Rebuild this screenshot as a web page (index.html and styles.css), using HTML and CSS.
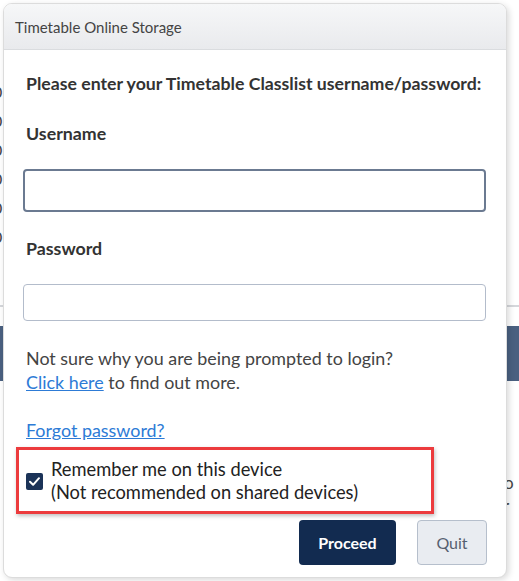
FILE: index.html
```html
<!DOCTYPE html>
<html lang="en">
<head>
    <meta charset="UTF-8">
    <meta name="viewport" content="width=device-width, initial-scale=1.0">
    <title>Timetable Online Storage</title>
    <link rel="stylesheet" href="styles.css">
</head>
<body>

    <div class="page">
        <div class="page-title">Timetable</div>
        <ul class="page-list">
            <li>0</li><li>0</li><li>0</li><li>0</li><li>0</li><li>0</li><li>,</li>
        </ul>
        <div class="page-rule"></div>
        <div class="page-band"></div>
        <p class="page-text">If you want to keep a copy of your timetable, you can also save the file to your computer and open it again later from the same screen.</p>
        <p class="page-text">Your timetable will be stored online.</p>
    </div>

    <div class="dialog">
        <div class="dialog-header">Timetable Online Storage</div>
        <div class="dialog-body">
            <p class="intro">Please enter your Timetable Classlist username/password:</p>

            <label class="field-label" for="username">Username</label>
            <input class="field username" id="username" type="text">

            <label class="field-label" for="password">Password</label>
            <input class="field password" id="password" type="password">

            <p class="help">Not sure why you are being prompted to login?<br>
                <a href="#">Click here</a> to find out more.</p>

            <p class="forgot"><a href="#">Forgot password?</a></p>

            <div class="remember">
                <span class="check">
                    <svg width="17" height="17" viewBox="0 0 17 17">
                        <rect x="0" y="0" width="17" height="17" rx="2" fill="#1b3358"/>
                        <path d="M4 8.8 L7.1 11.8 L13 5.2" fill="none" stroke="#fff" stroke-width="2" stroke-linecap="round" stroke-linejoin="round"/>
                    </svg>
                </span>
                <span class="remember-text">Remember me on this device<br>(Not recommended on shared devices)</span>
            </div>

            <div class="actions">
                <button class="btn btn-primary">Proceed</button>
                <button class="btn btn-quit">Quit</button>
            </div>
        </div>
    </div>

</body>
</html>
```

FILE: styles.css
```css
body {
    font-family: Lato, "Open Sans", sans-serif;
    margin: 0;
    background: #fff;
    color: #333;
}
.page {
    position: relative;
    width: 519px;
    height: 581px;
    overflow: hidden;
}
.page-title {
    font-size: 30px;
    line-height: 30px;
    margin: -27px 0 0 -4px;
    color: #222;
}
.page-list {
    list-style: none;
    margin: 74px 0 0 -7px;
    padding: 0;
    font-size: 16px;
    line-height: 29px;
    color: #444;
}
.page-rule {
    margin-top: 25px;
    height: 2px;
    background: #d5d7db;
}
.page-band {
    margin-top: 19px;
    height: 55px;
    background: #4a6080;
}
.page-text {
    margin: 67px 0 0 230px;
    width: 290px;
    font-size: 17px;
    line-height: 23px;
    color: #444;
}
.dialog {
    position: absolute;
    left: 3px;
    top: 3px;
    width: 502px;
    height: 573px;
    background: #fff;
    border: 1px solid #dcdcdc;
    border-radius: 9px;
    box-shadow: 2px 2px 6px rgba(0, 0, 0, 0.15);
    overflow: hidden;
}
.dialog-header {
    height: 45px;
    padding-left: 11px;
    line-height: 46px;
    font-size: 15px;
    color: #444;
    background: linear-gradient(#f6f7f8, #e9eaed);
    border-bottom: 1px solid #dadcdf;
}
.dialog-body {
    padding: 23px 19px 0 19px;
}
.intro {
    margin: 0 0 27px 3px;
    font-size: 17.7px;
    line-height: 22px;
    font-weight: 700;
    color: #333;
}
.field-label {
    display: block;
    margin-left: 3px;
    font-size: 17.8px;
    line-height: 22px;
    font-weight: 700;
    color: #333;
}
.field {
    display: block;
    box-sizing: border-box;
    width: 463px;
    margin: 25px 0 25px 0;
    border-radius: 4px;
    background: #fff;
    font-family: inherit;
    font-size: 16px;
    outline: none;
}
.username {
    height: 43px;
    border: 2px solid #6b7a91;
}
.password {
    height: 37px;
    border: 1px solid #b3bccb;
}
.help {
    margin: 0 0 24px 3px;
    font-size: 17.9px;
    line-height: 24px;
    color: #444;
}
a {
    color: #2d7bd6;
    text-decoration: underline;
}
.forgot {
    margin: 0 0 5px 3px;
    font-size: 17.9px;
    line-height: 24px;
}
.remember {
    display: flex;
    align-items: center;
    width: 412px;
    height: 61px;
    margin-left: -7px;
    border: 3px solid #ec3b3d;
    box-shadow: 1px 2px 4px rgba(0, 0, 0, 0.25);
}
.check {
    display: flex;
    margin: 2px 0 0 7px;
}
.remember-text {
    margin-left: 8px;
    font-size: 18.3px;
    line-height: 23px;
    color: #222;
}
.actions {
    display: flex;
    justify-content: flex-end;
    gap: 21px;
    margin-top: 6px;
}
.btn {
    height: 45px;
    border-radius: 4px;
    font-family: inherit;
    font-size: 16px;
    cursor: pointer;
}
.btn-primary {
    width: 97px;
    background: #122b50;
    border: none;
    color: #fff;
    font-weight: 700;
}
.btn-quit {
    width: 70px;
    background: #e9ecf1;
    border: 1px solid #b6bfcc;
    color: #566070;
}
```
